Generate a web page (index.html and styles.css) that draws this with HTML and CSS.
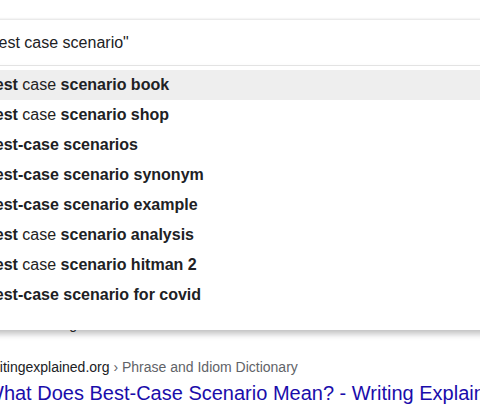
FILE: index.html
```html
<!DOCTYPE html>
<html>
<head>
<meta charset="utf-8">
<link rel="stylesheet" href="styles.css">
</head>
<body>
<div class="page">
  <div class="search">
    <div class="input">"best case scenario"</div>
    <ul class="suggestions">
      <li class="active"><b>best</b> case <b>scenario book</b></li>
      <li><b>best</b> case <b>scenario shop</b></li>
      <li><b>best-case scenarios</b></li>
      <li><b>best-case scenario synonym</b></li>
      <li><b>best-case scenario example</b></li>
      <li><b>best</b> case <b>scenario analysis</b></li>
      <li><b>best</b> case <b>scenario hitman 2</b></li>
      <li><b>best-case scenario for covid</b></li>
    </ul>
  </div>
  <div class="behind">Web meaning</div>
  <div class="result">
    <div class="crumb">writingexplained.org <span class="path">› Phrase and Idiom Dictionary</span></div>
    <a class="title" href="#">What Does Best-Case Scenario Mean? - Writing Explained</a>
  </div>
</div>
</body>
</html>
```

FILE: styles.css
```css
html, body {
  margin: 0;
  padding: 0;
  background: #fff;
  overflow: hidden;
}
body {
  font-family: "Liberation Sans", Arial, sans-serif;
  color: #202124;
  width: 480px;
  height: 414px;
}
.page {
  padding-top: 20px;
  margin-left: -15px;
}
.search {
  position: relative;
  width: 560px;
  background: #fff;
  box-shadow: 0 -1px 2px rgba(0, 0, 0, 0.12);
  z-index: 2;
}
.input {
  height: 46px;
  box-sizing: border-box;
  padding-top: 13px;
  margin-left: -1px;
  font-size: 16px;
  line-height: 20px;
  color: #202124;
  border-bottom: 1px solid #e8e8e8;
}
.suggestions {
  position: absolute;
  left: 0;
  right: 0;
  top: 100%;
  margin: 0;
  padding: 4px 0 20px;
  list-style: none;
  background: #fff;
  box-shadow: 0 4px 6px rgba(32, 33, 36, 0.28);
}
.suggestions li {
  height: 30px;
  line-height: 30px;
  font-size: 16px;
  color: #222;
}
.suggestions li b {
  color: #202124;
}
.suggestions li.active {
  background: #eeeeee;
}
.behind {
  margin-top: 248px;
  padding-left: 6px;
  font-size: 14px;
  line-height: 20px;
  color: #202124;
}
.result {
  margin-top: 23px;
}
.crumb {
  font-size: 14px;
  line-height: 20px;
  color: #202124;
}
.crumb .path {
  color: #5f6368;
}
.title {
  display: block;
  margin-top: 3px;
  font-size: 20px;
  line-height: 26px;
  color: #1a0dab;
  text-decoration: none;
  white-space: nowrap;
}
```
